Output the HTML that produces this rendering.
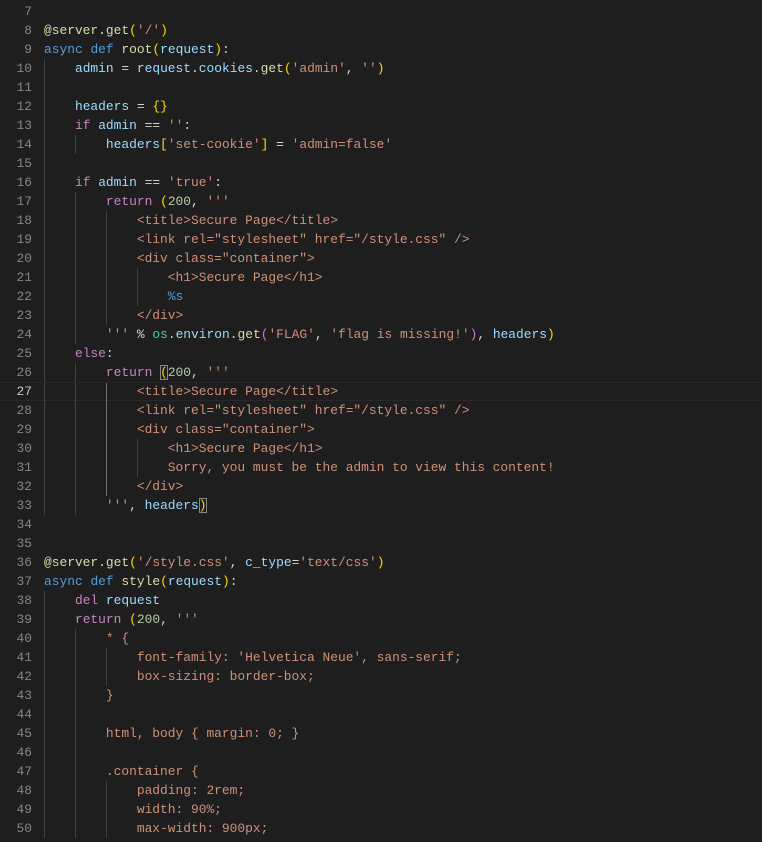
<!DOCTYPE html>
<html><head><meta charset="utf-8"><style>
body{margin:0;background:#1e1e1e;width:762px;height:842px;overflow:hidden;font-family:"Liberation Mono",monospace;font-size:12.9px}
#w{padding-top:2px}
.l{position:relative;height:19px;line-height:19px;width:762px;white-space:pre}
.n{position:absolute;left:0;width:32px;color:#858585;text-align:right}
.t{position:absolute;left:44px;color:#d4d4d4}
.g{position:absolute;top:0;height:19px;width:1px;background:#404040}
.g0{left:44px}.g1{left:75px}.g2{left:106px}.g3{left:137px}
.a{background:#707070}
.k{color:#569cd6}.c{color:#c586c0}.f{color:#dcdcaa}.v{color:#9cdcfe}.s{color:#ce9178}.o{color:#b5cea8}.b1{color:#ffd700}.b2{color:#da70d6}.m{color:#4ec9b0}
.cur{border-top:1px solid #282828;border-bottom:1px solid #282828;box-sizing:border-box;line-height:17px}
.cur .n{color:#c6c6c6}
.bx{outline:1px solid #888;outline-offset:-1px}
</style></head><body>
<div id="w">
<div class="l"><span class="n">7</span><span class="t"></span></div>
<div class="l"><span class="n">8</span><span class="t"><span class="f">@server.get</span><span class="b1">(</span><span class="s">'/'</span><span class="b1">)</span></span></div>
<div class="l"><span class="n">9</span><span class="t"><span class="k">async</span> <span class="k">def</span> <span class="f">root</span><span class="b1">(</span><span class="v">request</span><span class="b1">)</span>:</span></div>
<div class="l"><i class="g g0"></i><span class="n">10</span><span class="t">    <span class="v">admin</span> = <span class="v">request</span>.<span class="v">cookies</span>.<span class="f">get</span><span class="b1">(</span><span class="s">'admin'</span>, <span class="s">''</span><span class="b1">)</span></span></div>
<div class="l"><i class="g g0"></i><span class="n">11</span><span class="t"></span></div>
<div class="l"><i class="g g0"></i><span class="n">12</span><span class="t">    <span class="v">headers</span> = <span class="b1">{}</span></span></div>
<div class="l"><i class="g g0"></i><span class="n">13</span><span class="t">    <span class="c">if</span> <span class="v">admin</span> == <span class="s">''</span>:</span></div>
<div class="l"><i class="g g0"></i><i class="g g1"></i><span class="n">14</span><span class="t">        <span class="v">headers</span><span class="b1">[</span><span class="s">'set-cookie'</span><span class="b1">]</span> = <span class="s">'admin=false'</span></span></div>
<div class="l"><i class="g g0"></i><span class="n">15</span><span class="t"></span></div>
<div class="l"><i class="g g0"></i><span class="n">16</span><span class="t">    <span class="c">if</span> <span class="v">admin</span> == <span class="s">'true'</span>:</span></div>
<div class="l"><i class="g g0"></i><i class="g g1"></i><span class="n">17</span><span class="t">        <span class="c">return</span> <span class="b1">(</span><span class="o">200</span>, <span class="s">'''</span></span></div>
<div class="l"><i class="g g0"></i><i class="g g1"></i><i class="g g2"></i><span class="n">18</span><span class="t"><span class="s">            &lt;title&gt;Secure Page&lt;/title&gt;</span></span></div>
<div class="l"><i class="g g0"></i><i class="g g1"></i><i class="g g2"></i><span class="n">19</span><span class="t"><span class="s">            &lt;link rel="stylesheet" href="/style.css" /&gt;</span></span></div>
<div class="l"><i class="g g0"></i><i class="g g1"></i><i class="g g2"></i><span class="n">20</span><span class="t"><span class="s">            &lt;div class="container"&gt;</span></span></div>
<div class="l"><i class="g g0"></i><i class="g g1"></i><i class="g g2"></i><i class="g g3"></i><span class="n">21</span><span class="t"><span class="s">                &lt;h1&gt;Secure Page&lt;/h1&gt;</span></span></div>
<div class="l"><i class="g g0"></i><i class="g g1"></i><i class="g g2"></i><i class="g g3"></i><span class="n">22</span><span class="t">                <span class="k">%s</span></span></div>
<div class="l"><i class="g g0"></i><i class="g g1"></i><i class="g g2"></i><span class="n">23</span><span class="t"><span class="s">            &lt;/div&gt;</span></span></div>
<div class="l"><i class="g g0"></i><i class="g g1"></i><span class="n">24</span><span class="t">        <span class="s">'''</span> % <span class="m">os</span>.<span class="v">environ</span>.<span class="f">get</span><span class="b2">(</span><span class="s">'FLAG'</span>, <span class="s">'flag is missing!'</span><span class="b2">)</span>, <span class="v">headers</span><span class="b1">)</span></span></div>
<div class="l"><i class="g g0"></i><span class="n">25</span><span class="t">    <span class="c">else</span>:</span></div>
<div class="l"><i class="g g0"></i><i class="g g1"></i><span class="n">26</span><span class="t">        <span class="c">return</span> <span class="b1 bx">(</span><span class="o">200</span>, <span class="s">'''</span></span></div>
<div class="l cur"><i class="g g0"></i><i class="g g1"></i><i class="g g2 a"></i><span class="n">27</span><span class="t"><span class="s">            &lt;title&gt;Secure Page&lt;/title&gt;</span></span></div>
<div class="l"><i class="g g0"></i><i class="g g1"></i><i class="g g2 a"></i><span class="n">28</span><span class="t"><span class="s">            &lt;link rel="stylesheet" href="/style.css" /&gt;</span></span></div>
<div class="l"><i class="g g0"></i><i class="g g1"></i><i class="g g2 a"></i><span class="n">29</span><span class="t"><span class="s">            &lt;div class="container"&gt;</span></span></div>
<div class="l"><i class="g g0"></i><i class="g g1"></i><i class="g g2 a"></i><i class="g g3"></i><span class="n">30</span><span class="t"><span class="s">                &lt;h1&gt;Secure Page&lt;/h1&gt;</span></span></div>
<div class="l"><i class="g g0"></i><i class="g g1"></i><i class="g g2 a"></i><i class="g g3"></i><span class="n">31</span><span class="t"><span class="s">                Sorry, you must be the admin to view this content!</span></span></div>
<div class="l"><i class="g g0"></i><i class="g g1"></i><i class="g g2 a"></i><span class="n">32</span><span class="t"><span class="s">            &lt;/div&gt;</span></span></div>
<div class="l"><i class="g g0"></i><i class="g g1"></i><span class="n">33</span><span class="t">        <span class="s">'''</span>, <span class="v">headers</span><span class="b1 bx">)</span></span></div>
<div class="l"><span class="n">34</span><span class="t"></span></div>
<div class="l"><span class="n">35</span><span class="t"></span></div>
<div class="l"><span class="n">36</span><span class="t"><span class="f">@server.get</span><span class="b1">(</span><span class="s">'/style.css'</span>, <span class="v">c_type</span>=<span class="s">'text/css'</span><span class="b1">)</span></span></div>
<div class="l"><span class="n">37</span><span class="t"><span class="k">async</span> <span class="k">def</span> <span class="f">style</span><span class="b1">(</span><span class="v">request</span><span class="b1">)</span>:</span></div>
<div class="l"><i class="g g0"></i><span class="n">38</span><span class="t">    <span class="c">del</span> <span class="v">request</span></span></div>
<div class="l"><i class="g g0"></i><span class="n">39</span><span class="t">    <span class="c">return</span> <span class="b1">(</span><span class="o">200</span>, <span class="s">'''</span></span></div>
<div class="l"><i class="g g0"></i><i class="g g1"></i><span class="n">40</span><span class="t"><span class="s">        * {</span></span></div>
<div class="l"><i class="g g0"></i><i class="g g1"></i><i class="g g2"></i><span class="n">41</span><span class="t"><span class="s">            font-family: 'Helvetica Neue', sans-serif;</span></span></div>
<div class="l"><i class="g g0"></i><i class="g g1"></i><i class="g g2"></i><span class="n">42</span><span class="t"><span class="s">            box-sizing: border-box;</span></span></div>
<div class="l"><i class="g g0"></i><i class="g g1"></i><span class="n">43</span><span class="t"><span class="s">        }</span></span></div>
<div class="l"><i class="g g0"></i><i class="g g1"></i><span class="n">44</span><span class="t"></span></div>
<div class="l"><i class="g g0"></i><i class="g g1"></i><span class="n">45</span><span class="t"><span class="s">        html, body { margin: 0; }</span></span></div>
<div class="l"><i class="g g0"></i><i class="g g1"></i><span class="n">46</span><span class="t"></span></div>
<div class="l"><i class="g g0"></i><i class="g g1"></i><span class="n">47</span><span class="t"><span class="s">        .container {</span></span></div>
<div class="l"><i class="g g0"></i><i class="g g1"></i><i class="g g2"></i><span class="n">48</span><span class="t"><span class="s">            padding: 2rem;</span></span></div>
<div class="l"><i class="g g0"></i><i class="g g1"></i><i class="g g2"></i><span class="n">49</span><span class="t"><span class="s">            width: 90%;</span></span></div>
<div class="l"><i class="g g0"></i><i class="g g1"></i><i class="g g2"></i><span class="n">50</span><span class="t"><span class="s">            max-width: 900px;</span></span></div>
</div>
</body></html>
